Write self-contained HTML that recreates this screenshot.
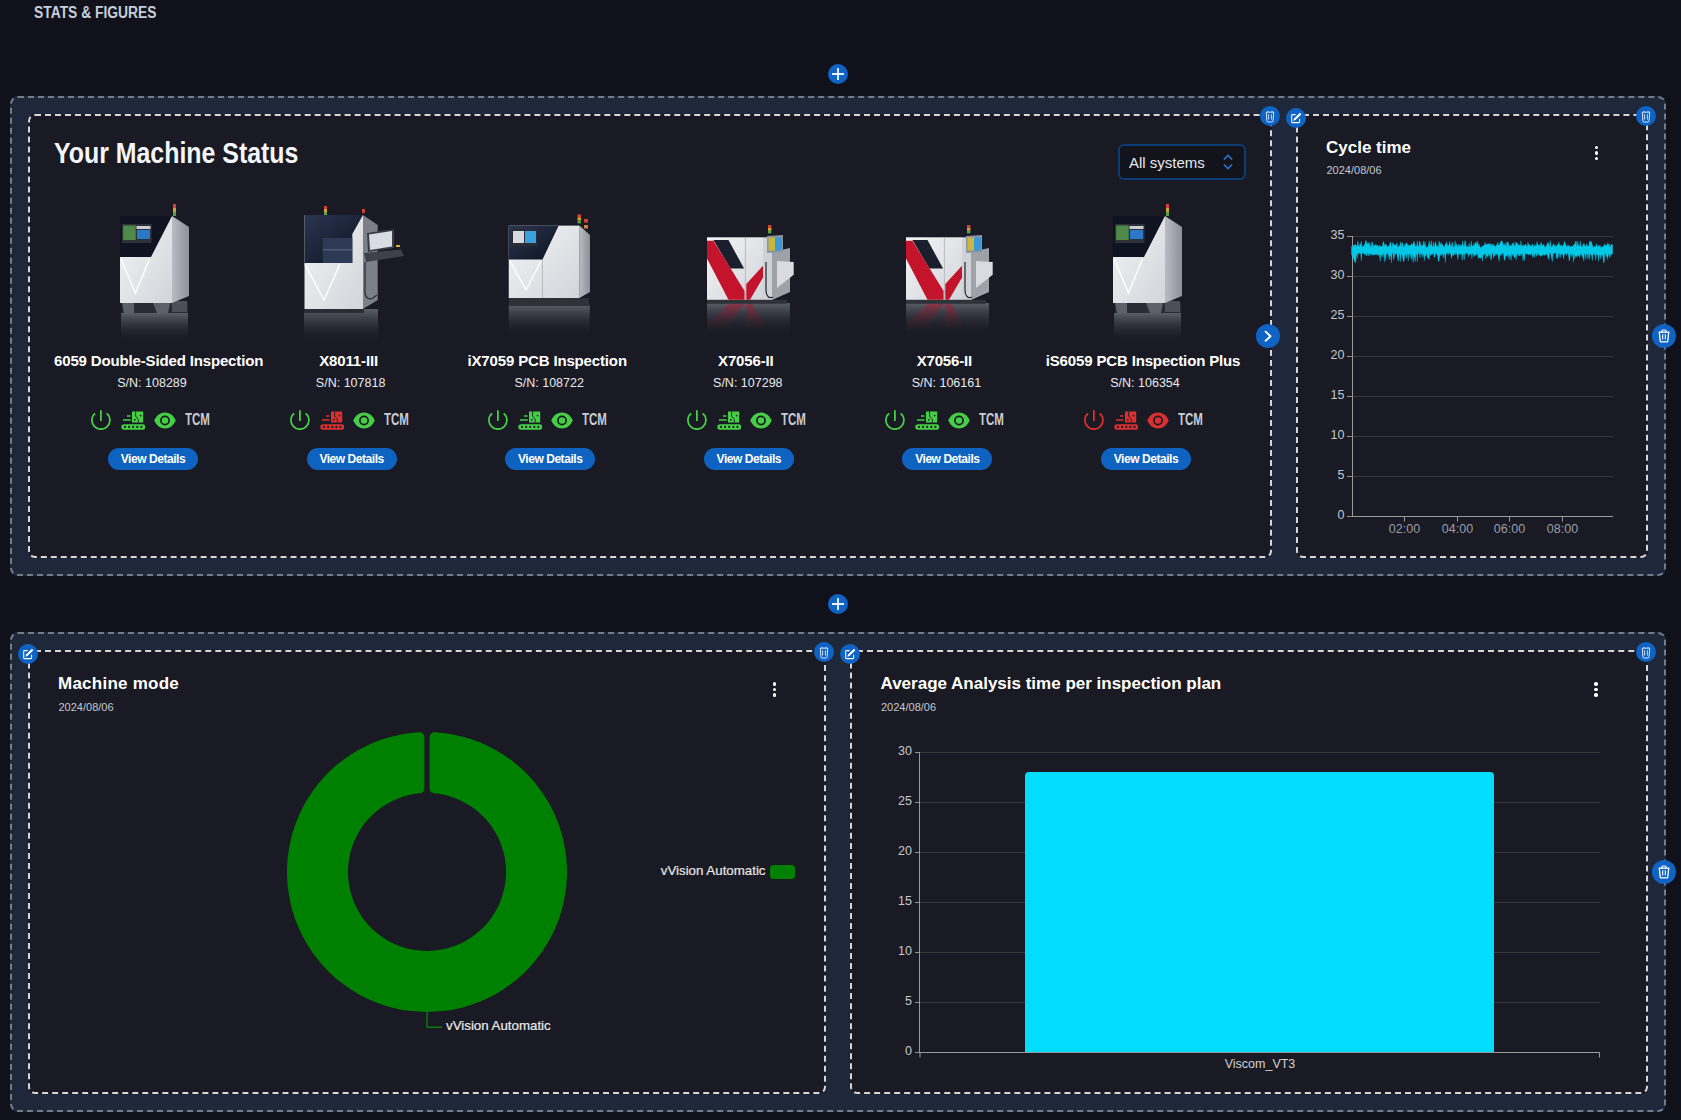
<!DOCTYPE html>
<html><head><meta charset="utf-8">
<style>
*{box-sizing:border-box;margin:0;padding:0}
html,body{width:1681px;height:1120px;overflow:hidden;background:#10111a;font-family:"Liberation Sans",sans-serif;color:#fff}
.a{position:absolute;white-space:nowrap}
.t{position:absolute;white-space:nowrap;transform-origin:0 0}
.outer{position:absolute;left:10px;width:1656px;height:480px;background:#1e283a;border:2px dashed #737c89;border-radius:8px}
.card{position:absolute;background:#191a23;border:2px dashed #d6d6d6;border-radius:7px}
.bb{position:absolute;border-radius:50%;background:#0e63c4}
.bb svg{position:absolute;left:0;top:0}
.nm{font-size:15px;line-height:15px;font-weight:bold;color:#fff}
.sn{font-size:12.5px;line-height:12.5px;color:#e8eaee}
.vd{position:absolute;width:90px;height:22px;border-radius:11px;background:#0e62c0;top:448px}
.vd span{position:absolute;left:0;right:0;top:5px;text-align:center;font-size:12px;line-height:12px;font-weight:bold;color:#fff;letter-spacing:-0.45px}
.tcm{font-size:16px;line-height:16px;font-weight:bold;color:#c8ccd3;transform:scaleX(0.72)}
.ttl{font-size:17px;line-height:17px;font-weight:bold;color:#fff}
.dt{font-size:11px;line-height:11px;color:#c3c8d0}
.yl{position:absolute;font-size:12.5px;line-height:12.5px;color:#c5c8ce;text-align:right;width:30px}
.xl{position:absolute;font-size:12.5px;line-height:12.5px;color:#9a9ea6;text-align:center;width:50px}
.dots{position:absolute;width:4px}
.dots i{display:block;width:3.5px;height:3.5px;border-radius:1.75px;background:#fff;margin-bottom:2.1px}
</style></head><body>
<svg width="0" height="0" style="position:absolute">
<defs>
<symbol id="trs" viewBox="0 0 20 20"><path d="M6.3 6.2h7.4l-.6 8.6c-.1.8-.6 1.2-1.3 1.2H8.2c-.7 0-1.2-.4-1.3-1.2z" fill="none" stroke="#dfe8f5" stroke-width="1"/><path d="M8 6V4.9M12 6V4.9" stroke="#dfe8f5" stroke-width="1.1"/><path d="M8.6 8.3v5.2M11.4 8.3v5.2" stroke="#dfe8f5" stroke-width="0.9"/></symbol>
<symbol id="trl" viewBox="0 0 24 24"><path d="M6.6 8.2h10.8" stroke="#fff" stroke-width="1.3" fill="none"/><path d="M7.3 8.3l0.9 8.6c.1.7.5 1 1.1 1h5.4c.6 0 1-.3 1.1-1l0.9-8.6" fill="none" stroke="#fff" stroke-width="1.3"/><path d="M9.9 8V7c0-.6.4-1 1-1h2.2c.6 0 1 .4 1 1v1" fill="none" stroke="#fff" stroke-width="1.2"/><path d="M10.7 10.3v5.2M13.3 10.3v5.2" stroke="#fff" stroke-width="1.1"/></symbol>
<symbol id="edt" viewBox="0 0 20 20"><path d="M9.6 6.6H6.5c-.5 0-.8.3-.8.8v6.4c0 .5.3.8.8.8h6.3c.5 0 .8-.3.8-.8v-3.1" fill="none" stroke="#fff" stroke-width="1.05"/><path d="M13.9 4.7l1.5 1.5-5.9 5.9-2.2.7.7-2.2z" fill="#fff"/></symbol>
<symbol id="pls" viewBox="0 0 20 20"><path d="M10 4v12M4 10h12" stroke="#e8f0fa" stroke-width="1.9"/></symbol>
<symbol id="arr" viewBox="0 0 24 24"><path d="M9.6 7.6l4.9 4.6-4.9 4.6" fill="none" stroke="#fff" stroke-width="1.9" stroke-linecap="round" stroke-linejoin="round"/></symbol>
<symbol id="pw" viewBox="0 0 20 20"><path d="M4.1 3.3A9 9 0 1 0 15.7 3.3" fill="none" stroke="currentColor" stroke-width="1.75"/><path d="M9.9 0.2V10.9" stroke="currentColor" stroke-width="1.8"/></symbol>
<symbol id="cv" viewBox="0 0 24 19"><rect x="0.3" y="13.2" width="24" height="5.5" rx="2.75" fill="currentColor"/><g fill="#191a23"><circle cx="4" cy="15.95" r="1.1"/><circle cx="8.1" cy="15.95" r="1.1"/><circle cx="12.2" cy="15.95" r="1.1"/><circle cx="16.3" cy="15.95" r="1.1"/><circle cx="20.4" cy="15.95" r="1.1"/></g><rect x="11" y="0.5" width="11.2" height="11" fill="currentColor"/><path d="M14.6 0.5v4.6l2.7 3.4v3" stroke="#191a23" stroke-width="0.9" fill="none"/><circle cx="13.8" cy="8.8" r="0.9" fill="#191a23"/><circle cx="19.6" cy="4.6" r="0.9" fill="#191a23"/><path d="M6 5h3.5M2 9h7.7" stroke="currentColor" stroke-width="1.6"/></symbol>
<symbol id="eye" viewBox="0 0 22 17"><path d="M0.3 8.5C2.6 3.3 6.3 0.6 11 0.6S19.4 3.3 21.7 8.5C19.4 13.7 15.7 16.4 11 16.4S2.6 13.7 0.3 8.5z" fill="currentColor"/><circle cx="11" cy="8.5" r="4.1" fill="none" stroke="#191a23" stroke-width="1.7"/></symbol>
</defs></svg>

<div class="t" style="left:34px;top:4.5px;font-size:16px;line-height:16px;font-weight:bold;color:#c6cedb;transform:scaleX(0.865)">STATS &amp; FIGURES</div>

<div class="bb" style="left:828px;top:64px;width:20px;height:20px"><svg width="20" height="20"><use href="#pls"/></svg></div>
<div class="outer" style="top:96px"></div>
<div class="card" style="left:28px;top:114px;width:1244px;height:444px"></div>
<div class="card" style="left:1296px;top:114px;width:352px;height:444px"></div>
<div class="bb" style="left:828px;top:594px;width:20px;height:20px"><svg width="20" height="20"><use href="#pls"/></svg></div>
<div class="outer" style="top:632px"></div>
<div class="card" style="left:28px;top:650px;width:798px;height:444px"></div>
<div class="card" style="left:850px;top:650px;width:798px;height:444px"></div>
<svg class="a" style="left:0;top:0" width="1300" height="560">
<defs>
<linearGradient id="rf" x1="0" y1="0" x2="0" y2="1"><stop offset="0" stop-color="#676a73" stop-opacity="0.85"/><stop offset="1" stop-color="#191a23" stop-opacity="0"/></linearGradient>
<linearGradient id="rfr" x1="0" y1="0" x2="0" y2="1"><stop offset="0" stop-color="#b01830" stop-opacity="0.55"/><stop offset="1" stop-color="#191a23" stop-opacity="0"/></linearGradient>
<linearGradient id="sd" x1="0" y1="0" x2="1" y2="0"><stop offset="0" stop-color="#b9bcc3"/><stop offset="1" stop-color="#8e9199"/></linearGradient>
<linearGradient id="fr" x1="0" y1="0" x2="1" y2="1"><stop offset="0" stop-color="#f3f4f7"/><stop offset="1" stop-color="#d2d5da"/></linearGradient>
<linearGradient id="dw" x1="0" y1="0" x2="1" y2="1"><stop offset="0" stop-color="#2a3550"/><stop offset="1" stop-color="#0e1322"/></linearGradient>
<g id="mA">
<rect x="121" y="313" width="67" height="30" fill="url(#rf)"/>
<rect x="122" y="303" width="66" height="10" fill="#2a2c33"/>
<polygon points="122,303 134,303 134,313 124,313" fill="#5d6068"/><polygon points="153,303 170,303 168,313 157,313" fill="#5d6068"/><rect x="172" y="301" width="15" height="11" fill="#4c4f57"/>
<polygon points="172,216 189,227 189,296 172,303" fill="url(#sd)"/>
<rect x="120" y="216" width="52" height="87" fill="url(#fr)"/>
<polygon points="120,216 172,216 151,257 120,257" fill="#0f1322"/>
<rect x="122" y="224" width="29.6" height="19" fill="#2e3138"/>
<rect x="123.2" y="225.5" width="12.5" height="14.5" fill="#4f8a4a"/>
<rect x="136.5" y="226" width="14" height="3" fill="#c8ccd2"/>
<rect x="137" y="230" width="13" height="9" fill="#2a78c8"/>
<polyline points="121,259 135.5,293 149.5,259" fill="none" stroke="#ffffff" stroke-width="2.2" opacity="0.25"/>
<polyline points="121,259 135.5,293 149.5,259" fill="none" stroke="#ffffff" stroke-width="1.1"/>
<rect x="173" y="204" width="3" height="4" fill="#d84030"/><rect x="173" y="208" width="3" height="4" fill="#d0a030"/><rect x="173" y="212" width="3" height="4" fill="#50a050"/>
</g>
</defs>
<use href="#mA"/>
<use href="#mA" x="993"/>
<!-- machine B -->
<rect x="304" y="309" width="74" height="36" fill="url(#rf)"/>
<rect x="304" y="309" width="60" height="4" fill="#2b2d35"/>
<polygon points="363,215 377.7,225 377.7,300 363,309" fill="#7d8088"/>
<rect x="304.5" y="215" width="58.5" height="94" fill="url(#fr)"/>
<polygon points="304.5,215 363,215 352.3,234 352.3,263 304.5,263" fill="url(#dw)"/>
<rect x="322.8" y="238" width="29.5" height="25" fill="#2c3a55"/><rect x="322.8" y="249.5" width="29.5" height="0.8" fill="#6a7890"/>
<polyline points="305,264 324,300 340,264" fill="none" stroke="#ffffff" stroke-width="2.2" opacity="0.25"/><polyline points="305,264 324,300 340,264" fill="none" stroke="#ffffff" stroke-width="1.1"/>
<polygon points="367,233 394,229 394,248 368,252" fill="#3b3e46"/>
<polygon points="369,234.5 392,231 392,246.5 370,250" fill="#d9dde3"/>
<polygon points="364,253 401,249.5 404,256 366,262" fill="#3e4149"/>
<rect x="396" y="245" width="4" height="2" fill="#d8b030"/>
<path d="M365 262v30c0 6 4 8 8 6l4-3" fill="none" stroke="#2a2c33" stroke-width="1.2"/>
<rect x="324" y="206" width="3" height="3" fill="#d04030"/><rect x="324" y="209" width="3" height="3" fill="#d0a030"/><rect x="324" y="212" width="3" height="3" fill="#60a050"/><rect x="362" y="209" width="3" height="4" fill="#d04030"/>
<!-- machine C -->
<rect x="508.75" y="305" width="81" height="32" fill="url(#rf)"/>
<rect x="509" y="298" width="80" height="8" fill="#2f3139"/>
<polygon points="579.4,225.6 590,235 590,292 579.4,298" fill="url(#sd)"/>
<rect x="508.75" y="225.6" width="70.65" height="72.4" fill="url(#fr)"/>
<polygon points="508.75,225.6 558.75,225.6 542.5,259.4 508.75,259.4" fill="url(#dw)"/>
<rect x="512" y="229.4" width="25" height="16.85" fill="#2a2d33"/>
<rect x="513" y="231" width="11" height="12" fill="#d8dadf"/>
<rect x="525" y="231" width="11" height="12" fill="#3aa0e0"/>
<line x1="542.5" y1="259.4" x2="542.5" y2="298" stroke="#a0a3aa" stroke-width="0.6"/>
<polyline points="510,261 526,290 541,261" fill="none" stroke="#ffffff" stroke-width="2.2" opacity="0.25"/><polyline points="510,261 526,290 541,261" fill="none" stroke="#ffffff" stroke-width="1.1"/>
<rect x="577.5" y="214.4" width="3.5" height="3" fill="#d84030"/><rect x="577.5" y="217.4" width="3.5" height="3" fill="#d0a030"/><rect x="577.5" y="220.4" width="3.5" height="3" fill="#50a050"/>
<rect x="584" y="219" width="4" height="3.5" fill="#d84030"/><rect x="584" y="225" width="4" height="3.5" fill="#d08030"/>
<!-- machine D -->
<g id="mD">
<rect x="707" y="303" width="83" height="33" fill="url(#rf)"/>
<polygon points="728.5,304 744.6,304 720,336 707,336 707,325" fill="url(#rfr)"/>
<polygon points="746.3,304 752,304 763,322 763,336 746.3,336" fill="url(#rfr)"/>
<rect x="707" y="299.8" width="80" height="4" fill="#30323a"/>
<polygon points="772,252 790,248 790,292 772,300" fill="#9ea1a8"/>
<polygon points="777,261 793.7,262 793.7,274.7 777,288" fill="#d9dbe0"/>
<rect x="763" y="237.3" width="9" height="62.5" fill="#cfd2d7"/>
<rect x="707" y="237.3" width="56" height="62.5" fill="url(#fr)"/>
<polygon points="713.4,240.1 728.5,240.1 744.1,268.5 730.4,268.5" fill="#1b1e2c"/>
<polygon points="707,240.7 713.4,240.7 744.6,291 744.6,299.8 728.5,299.8 707,258.5" fill="#c3142b"/>
<polygon points="746.3,284 763,265.8 763,277.5 750,299.8 746.3,299.8" fill="#c3142b"/>
<line x1="745.4" y1="237.3" x2="745.4" y2="299.8" stroke="#b8bac0" stroke-width="1"/>
<polygon points="767,236 783,235 783,252 767,253" fill="#8f959e"/>
<rect x="768.5" y="237.5" width="6.5" height="13" fill="#c8b840"/><rect x="775" y="237.5" width="7" height="13" fill="#3a98d8"/>
<path d="M766 262v28c0 6 3 9 7 7" fill="none" stroke="#24262c" stroke-width="1.2"/>
<rect x="768" y="225" width="3.4" height="3" fill="#d84030"/><rect x="768" y="228" width="3.4" height="2.8" fill="#d0a030"/><rect x="768" y="230.8" width="3.4" height="2.6" fill="#50a050"/>
</g>
<use href="#mD" x="199"/>
</svg>
<div class="t" style="left:54px;top:137.8px;font-size:29.5px;line-height:29.5px;font-weight:bold;color:#f4f6fa;transform:scaleX(0.844)">Your Machine Status</div>
<div class="a" style="left:1118px;top:144px;width:128px;height:36px;border:2px solid #0a3c75;border-radius:6px;background:#12131b"></div>
<div class="a" style="left:1129px;top:154.8px;font-size:15px;line-height:15px;color:#e4e8ee">All systems</div>
<svg class="a" style="left:1220px;top:152px" width="16" height="20"><path d="M4 7.5l4-4.2 4 4.2M4 12.5l4 4.2 4-4.2" fill="none" stroke="#2b79d2" stroke-width="1.6"/></svg>
<div class="a nm" style="left:54px;top:353.3px;letter-spacing:-0.15px">6059 Double-Sided Inspection</div>
<div class="a sn" style="left:2.0px;width:300px;text-align:center;top:377.4px">S/N: 108289</div>
<svg class="a" style="left:91.0px;top:410px;color:#46cf46" width="20" height="20"><use href="#pw"/></svg>
<svg class="a" style="left:121.0px;top:410.5px;color:#46cf46" width="24" height="19"><use href="#cv"/></svg>
<svg class="a" style="left:154.0px;top:411.5px;color:#46cf46" width="22" height="17"><use href="#eye"/></svg>
<div class="t tcm" style="left:185.0px;top:411.7px">TCM</div>
<div class="vd" style="left:108.0px"><span>View Details</span></div>
<div class="a nm" style="left:198.6px;width:300px;text-align:center;top:353.3px;letter-spacing:-0.15px">X8011-III</div>
<div class="a sn" style="left:200.6px;width:300px;text-align:center;top:377.4px">S/N: 107818</div>
<svg class="a" style="left:289.6px;top:410px;color:#46cf46" width="20" height="20"><use href="#pw"/></svg>
<svg class="a" style="left:319.6px;top:410.5px;color:#d93131" width="24" height="19"><use href="#cv"/></svg>
<svg class="a" style="left:352.6px;top:411.5px;color:#46cf46" width="22" height="17"><use href="#eye"/></svg>
<div class="t tcm" style="left:383.6px;top:411.7px">TCM</div>
<div class="vd" style="left:306.6px"><span>View Details</span></div>
<div class="a nm" style="left:397.2px;width:300px;text-align:center;top:353.3px;letter-spacing:-0.15px">iX7059 PCB Inspection</div>
<div class="a sn" style="left:399.2px;width:300px;text-align:center;top:377.4px">S/N: 108722</div>
<svg class="a" style="left:488.2px;top:410px;color:#46cf46" width="20" height="20"><use href="#pw"/></svg>
<svg class="a" style="left:518.2px;top:410.5px;color:#46cf46" width="24" height="19"><use href="#cv"/></svg>
<svg class="a" style="left:551.2px;top:411.5px;color:#46cf46" width="22" height="17"><use href="#eye"/></svg>
<div class="t tcm" style="left:582.2px;top:411.7px">TCM</div>
<div class="vd" style="left:505.2px"><span>View Details</span></div>
<div class="a nm" style="left:595.8px;width:300px;text-align:center;top:353.3px;letter-spacing:-0.15px">X7056-II</div>
<div class="a sn" style="left:597.8px;width:300px;text-align:center;top:377.4px">S/N: 107298</div>
<svg class="a" style="left:686.8px;top:410px;color:#46cf46" width="20" height="20"><use href="#pw"/></svg>
<svg class="a" style="left:716.8px;top:410.5px;color:#46cf46" width="24" height="19"><use href="#cv"/></svg>
<svg class="a" style="left:749.8px;top:411.5px;color:#46cf46" width="22" height="17"><use href="#eye"/></svg>
<div class="t tcm" style="left:780.8px;top:411.7px">TCM</div>
<div class="vd" style="left:703.8px"><span>View Details</span></div>
<div class="a nm" style="left:794.4px;width:300px;text-align:center;top:353.3px;letter-spacing:-0.15px">X7056-II</div>
<div class="a sn" style="left:796.4px;width:300px;text-align:center;top:377.4px">S/N: 106161</div>
<svg class="a" style="left:885.4px;top:410px;color:#46cf46" width="20" height="20"><use href="#pw"/></svg>
<svg class="a" style="left:915.4px;top:410.5px;color:#46cf46" width="24" height="19"><use href="#cv"/></svg>
<svg class="a" style="left:948.4px;top:411.5px;color:#46cf46" width="22" height="17"><use href="#eye"/></svg>
<div class="t tcm" style="left:979.4px;top:411.7px">TCM</div>
<div class="vd" style="left:902.4px"><span>View Details</span></div>
<div class="a nm" style="left:993.0px;width:300px;text-align:center;top:353.3px;letter-spacing:-0.15px">iS6059 PCB Inspection Plus</div>
<div class="a sn" style="left:995.0px;width:300px;text-align:center;top:377.4px">S/N: 106354</div>
<svg class="a" style="left:1084.0px;top:410px;color:#d93131" width="20" height="20"><use href="#pw"/></svg>
<svg class="a" style="left:1114.0px;top:410.5px;color:#d93131" width="24" height="19"><use href="#cv"/></svg>
<svg class="a" style="left:1147.0px;top:411.5px;color:#d93131" width="22" height="17"><use href="#eye"/></svg>
<div class="t tcm" style="left:1178.0px;top:411.7px">TCM</div>
<div class="vd" style="left:1101.0px"><span>View Details</span></div>
<div class="bb" style="left:1256px;top:324px;width:24px;height:24px"><svg width="24" height="24"><use href="#arr"/></svg></div>
<div class="a ttl" style="left:1326px;top:138.5px">Cycle time</div>
<div class="a dt" style="left:1326.5px;top:165.3px">2024/08/06</div>
<div class="dots" style="left:1594.6px;top:145.5px"><i></i><i></i><i></i></div>
<svg class="a" style="left:1300px;top:220px" width="330" height="320">
<line x1="52" y1="16.5" x2="313" y2="16.5" stroke="#3b3a3a" stroke-width="1"/>
<line x1="47" y1="16.5" x2="52" y2="16.5" stroke="#8f8f8f" stroke-width="1"/>
<line x1="52" y1="56.5" x2="313" y2="56.5" stroke="#3b3a3a" stroke-width="1"/>
<line x1="47" y1="56.5" x2="52" y2="56.5" stroke="#8f8f8f" stroke-width="1"/>
<line x1="52" y1="96.5" x2="313" y2="96.5" stroke="#3b3a3a" stroke-width="1"/>
<line x1="47" y1="96.5" x2="52" y2="96.5" stroke="#8f8f8f" stroke-width="1"/>
<line x1="52" y1="136.5" x2="313" y2="136.5" stroke="#3b3a3a" stroke-width="1"/>
<line x1="47" y1="136.5" x2="52" y2="136.5" stroke="#8f8f8f" stroke-width="1"/>
<line x1="52" y1="176.5" x2="313" y2="176.5" stroke="#3b3a3a" stroke-width="1"/>
<line x1="47" y1="176.5" x2="52" y2="176.5" stroke="#8f8f8f" stroke-width="1"/>
<line x1="52" y1="216.5" x2="313" y2="216.5" stroke="#3b3a3a" stroke-width="1"/>
<line x1="47" y1="216.5" x2="52" y2="216.5" stroke="#8f8f8f" stroke-width="1"/>
<line x1="52" y1="256.5" x2="313" y2="256.5" stroke="#3b3a3a" stroke-width="1"/>
<line x1="47" y1="256.5" x2="52" y2="256.5" stroke="#8f8f8f" stroke-width="1"/>
<line x1="52" y1="296.5" x2="313" y2="296.5" stroke="#3b3a3a" stroke-width="1"/>
<line x1="47" y1="296.5" x2="52" y2="296.5" stroke="#8f8f8f" stroke-width="1"/>
<line x1="52.5" y1="16" x2="52.5" y2="297" stroke="#9a9a9a" stroke-width="1"/>
<line x1="52" y1="296.5" x2="313" y2="296.5" stroke="#9a9a9a" stroke-width="1"/>
<line x1="104.5" y1="296.5" x2="104.5" y2="301.5" stroke="#9a9a9a" stroke-width="1"/>
<line x1="157.5" y1="296.5" x2="157.5" y2="301.5" stroke="#9a9a9a" stroke-width="1"/>
<line x1="209.5" y1="296.5" x2="209.5" y2="301.5" stroke="#9a9a9a" stroke-width="1"/>
<line x1="262.5" y1="296.5" x2="262.5" y2="301.5" stroke="#9a9a9a" stroke-width="1"/>
</svg>
<svg class="a" style="left:1340px;top:220px" width="280" height="60"><polygon points="11.5,26.3 12.2,26.6 12.9,27.3 13.6,25.0 14.3,25.1 15.0,24.7 15.7,24.4 16.4,26.0 17.1,26.5 17.8,20.8 18.5,24.2 19.2,26.9 19.9,24.4 20.6,23.7 21.3,21.2 22.0,27.3 22.7,25.9 23.4,26.8 24.1,24.5 24.8,25.3 25.5,20.8 26.2,20.7 26.9,22.9 27.6,24.2 28.3,23.4 29.0,22.2 29.7,25.2 30.4,27.4 31.1,22.1 31.8,27.5 32.5,21.6 33.2,25.4 33.9,26.4 34.6,25.1 35.3,25.2 36.0,24.2 36.7,25.7 37.4,25.3 38.1,25.4 38.8,27.4 39.5,24.7 40.2,26.5 40.9,26.1 41.6,26.8 42.3,25.7 43.0,22.4 43.7,21.3 44.4,25.5 45.1,24.2 45.8,24.6 46.5,24.5 47.2,27.4 47.9,26.3 48.6,26.1 49.3,25.4 50.0,23.0 50.7,21.7 51.4,27.4 52.1,25.8 52.8,22.4 53.5,23.6 54.2,25.1 54.9,24.7 55.6,25.8 56.3,24.6 57.0,22.6 57.7,26.7 58.4,27.2 59.1,25.6 59.8,25.8 60.5,21.7 61.2,26.5 61.9,22.4 62.6,22.8 63.3,26.9 64.0,27.4 64.7,24.9 65.4,24.2 66.1,23.0 66.8,22.8 67.5,24.6 68.2,25.8 68.9,24.7 69.6,26.0 70.3,25.0 71.0,25.4 71.7,23.2 72.4,25.0 73.1,23.4 73.8,21.0 74.5,23.0 75.2,26.2 75.9,26.3 76.6,25.9 77.3,20.6 78.0,25.8 78.7,27.1 79.4,21.1 80.1,21.5 80.8,25.0 81.5,25.4 82.2,25.8 82.9,25.2 83.6,20.8 84.3,25.4 85.0,21.5 85.7,26.3 86.4,26.8 87.1,27.5 87.8,27.2 88.5,24.4 89.2,20.7 89.9,25.5 90.6,24.6 91.3,20.6 92.0,26.1 92.7,27.2 93.4,21.7 94.1,26.9 94.8,24.5 95.5,21.3 96.2,24.5 96.9,26.0 97.6,26.1 98.3,27.4 99.0,20.8 99.7,23.6 100.4,24.6 101.1,22.2 101.8,24.2 102.5,24.5 103.2,25.7 103.9,27.2 104.6,26.7 105.3,23.8 106.0,24.3 106.7,21.6 107.4,25.4 108.1,25.0 108.8,26.2 109.5,21.2 110.2,23.7 110.9,27.0 111.6,24.2 112.3,21.7 113.0,26.5 113.7,27.2 114.4,26.8 115.1,20.8 115.8,26.1 116.5,23.4 117.2,26.4 117.9,27.0 118.6,24.4 119.3,24.2 120.0,27.2 120.7,24.6 121.4,25.4 122.1,25.1 122.8,20.8 123.5,27.1 124.2,25.9 124.9,20.6 125.6,21.3 126.3,26.5 127.0,27.0 127.7,26.3 128.4,27.0 129.1,23.0 129.8,26.6 130.5,27.2 131.2,20.8 131.9,25.7 132.6,26.0 133.3,25.4 134.0,23.5 134.7,25.8 135.4,22.5 136.1,21.8 136.8,24.4 137.5,20.9 138.2,26.0 138.9,23.6 139.6,25.7 140.3,27.4 141.0,27.4 141.7,26.8 142.4,26.3 143.1,25.6 143.8,25.4 144.5,24.7 145.2,22.2 145.9,25.1 146.6,24.4 147.3,23.8 148.0,24.2 148.7,23.5 149.4,24.7 150.1,23.1 150.8,25.8 151.5,25.1 152.2,23.6 152.9,26.2 153.6,24.3 154.3,25.7 155.0,25.9 155.7,27.5 156.4,24.5 157.1,25.5 157.8,21.9 158.5,24.9 159.2,24.7 159.9,23.8 160.6,21.6 161.3,21.0 162.0,20.7 162.7,22.9 163.4,26.2 164.1,23.2 164.8,26.3 165.5,23.5 166.2,26.7 166.9,21.6 167.6,22.2 168.3,22.5 169.0,26.1 169.7,26.0 170.4,25.6 171.1,25.1 171.8,26.3 172.5,23.0 173.2,24.4 173.9,22.1 174.6,26.6 175.3,24.8 176.0,22.2 176.7,22.5 177.4,23.6 178.1,24.5 178.8,25.1 179.5,24.9 180.2,26.3 180.9,20.7 181.6,25.7 182.3,25.1 183.0,26.7 183.7,24.5 184.4,25.7 185.1,24.5 185.8,24.4 186.5,25.3 187.2,27.1 187.9,22.2 188.6,24.6 189.3,24.2 190.0,26.4 190.7,25.3 191.4,26.2 192.1,24.2 192.8,24.3 193.5,27.4 194.2,26.3 194.9,24.2 195.6,25.9 196.3,25.4 197.0,21.5 197.7,24.2 198.4,25.6 199.1,24.3 199.8,27.0 200.5,24.0 201.2,22.0 201.9,25.6 202.6,24.7 203.3,24.9 204.0,24.3 204.7,27.0 205.4,27.2 206.1,26.4 206.8,24.8 207.5,22.6 208.2,24.5 208.9,22.2 209.6,27.4 210.3,20.5 211.0,26.7 211.7,27.2 212.4,25.7 213.1,24.4 213.8,23.4 214.5,27.0 215.2,24.6 215.9,27.2 216.6,25.7 217.3,24.4 218.0,25.2 218.7,21.9 219.4,23.9 220.1,25.7 220.8,25.1 221.5,25.9 222.2,26.4 222.9,24.6 223.6,25.4 224.3,20.9 225.0,23.0 225.7,24.3 226.4,26.5 227.1,26.2 227.8,25.3 228.5,25.4 229.2,25.5 229.9,26.6 230.6,27.3 231.3,25.6 232.0,26.9 232.7,26.1 233.4,25.2 234.1,24.3 234.8,24.5 235.5,21.3 236.2,20.9 236.9,27.2 237.6,21.2 238.3,24.2 239.0,26.6 239.7,25.5 240.4,20.8 241.1,27.4 241.8,26.2 242.5,26.3 243.2,24.2 243.9,23.2 244.6,24.9 245.3,26.5 246.0,26.3 246.7,23.5 247.4,25.9 248.1,26.2 248.8,26.2 249.5,20.9 250.2,21.6 250.9,21.9 251.6,21.6 252.3,25.0 253.0,26.6 253.7,27.4 254.4,26.4 255.1,26.2 255.8,26.5 256.5,23.5 257.2,25.9 257.9,27.3 258.6,25.3 259.3,26.4 260.0,24.7 260.7,27.4 261.4,27.2 262.1,26.7 262.8,27.1 263.5,25.8 264.2,25.3 264.9,23.7 265.6,26.1 266.3,25.1 267.0,25.2 267.7,23.0 268.4,23.6 269.1,26.7 269.8,24.1 270.5,27.5 271.2,24.2 271.9,24.4 272.6,24.5 272.6,34.3 271.9,34.4 271.2,34.1 270.5,35.1 269.8,37.8 269.1,35.6 268.4,32.9 267.7,39.7 267.0,35.8 266.3,37.0 265.6,34.2 264.9,33.3 264.2,42.5 263.5,42.7 262.8,35.9 262.1,34.8 261.4,35.1 260.7,39.0 260.0,34.7 259.3,35.3 258.6,41.4 257.9,34.5 257.2,35.2 256.5,33.3 255.8,40.3 255.1,34.8 254.4,34.9 253.7,32.7 253.0,34.4 252.3,40.7 251.6,35.6 250.9,34.9 250.2,33.1 249.5,39.5 248.8,33.0 248.1,39.3 247.4,33.6 246.7,33.7 246.0,39.3 245.3,34.2 244.6,32.9 243.9,41.1 243.2,38.1 242.5,37.0 241.8,33.9 241.1,35.4 240.4,33.4 239.7,37.8 239.0,35.7 238.3,35.5 237.6,35.0 236.9,37.2 236.2,36.0 235.5,35.9 234.8,39.2 234.1,33.5 233.4,42.5 232.7,35.7 232.0,33.4 231.3,36.2 230.6,33.4 229.9,38.9 229.2,41.2 228.5,35.8 227.8,32.9 227.1,33.1 226.4,35.5 225.7,33.1 225.0,33.5 224.3,35.1 223.6,39.1 222.9,35.6 222.2,33.9 221.5,34.5 220.8,34.3 220.1,38.0 219.4,33.6 218.7,33.2 218.0,38.4 217.3,36.6 216.6,39.1 215.9,32.6 215.2,32.8 214.5,33.6 213.8,33.9 213.1,33.3 212.4,41.7 211.7,39.0 211.0,35.3 210.3,32.7 209.6,33.6 208.9,39.8 208.2,38.0 207.5,35.4 206.8,33.4 206.1,35.0 205.4,34.0 204.7,35.2 204.0,35.2 203.3,34.1 202.6,35.6 201.9,35.1 201.2,36.0 200.5,36.5 199.8,35.0 199.1,35.2 198.4,34.2 197.7,32.9 197.0,36.4 196.3,35.2 195.6,33.6 194.9,34.5 194.2,37.9 193.5,33.3 192.8,37.4 192.1,35.2 191.4,33.1 190.7,34.3 190.0,35.4 189.3,33.6 188.6,35.1 187.9,34.0 187.2,33.5 186.5,34.7 185.8,32.9 185.1,33.4 184.4,40.9 183.7,36.6 183.0,40.9 182.3,33.4 181.6,34.5 180.9,35.8 180.2,33.6 179.5,35.7 178.8,35.9 178.1,34.4 177.4,32.9 176.7,35.8 176.0,40.0 175.3,35.3 174.6,38.1 173.9,36.5 173.2,33.8 172.5,35.5 171.8,32.9 171.1,40.4 170.4,36.8 169.7,34.4 169.0,39.5 168.3,34.9 167.6,34.7 166.9,36.6 166.2,35.7 165.5,36.0 164.8,40.5 164.1,39.2 163.4,33.3 162.7,32.9 162.0,35.4 161.3,32.7 160.6,35.6 159.9,34.7 159.2,41.5 158.5,38.4 157.8,34.2 157.1,33.5 156.4,35.1 155.7,33.1 155.0,35.8 154.3,35.7 153.6,38.1 152.9,32.7 152.2,34.0 151.5,39.4 150.8,40.0 150.1,33.8 149.4,35.9 148.7,33.8 148.0,37.3 147.3,35.9 146.6,35.6 145.9,39.2 145.2,33.4 144.5,34.0 143.8,35.1 143.1,35.4 142.4,41.4 141.7,34.6 141.0,38.7 140.3,38.0 139.6,37.5 138.9,37.8 138.2,38.5 137.5,34.2 136.8,33.3 136.1,35.5 135.4,34.9 134.7,35.1 134.0,36.8 133.3,34.2 132.6,32.9 131.9,38.8 131.2,33.2 130.5,34.7 129.8,35.3 129.1,32.9 128.4,37.1 127.7,33.3 127.0,33.6 126.3,32.7 125.6,34.6 124.9,32.9 124.2,40.2 123.5,34.0 122.8,34.5 122.1,40.4 121.4,33.2 120.7,34.4 120.0,34.6 119.3,33.1 118.6,34.4 117.9,39.6 117.2,35.6 116.5,32.8 115.8,35.0 115.1,32.8 114.4,34.6 113.7,34.8 113.0,35.9 112.3,33.8 111.6,38.7 110.9,35.3 110.2,33.6 109.5,32.8 108.8,33.0 108.1,35.4 107.4,33.3 106.7,33.2 106.0,34.2 105.3,42.8 104.6,34.4 103.9,34.0 103.2,38.2 102.5,33.1 101.8,35.4 101.1,33.8 100.4,35.5 99.7,36.4 99.0,40.7 98.3,41.7 97.6,35.4 96.9,34.8 96.2,33.6 95.5,33.5 94.8,36.4 94.1,37.7 93.4,32.8 92.7,34.1 92.0,34.7 91.3,34.4 90.6,35.7 89.9,32.8 89.2,39.6 88.5,38.9 87.8,37.7 87.1,36.5 86.4,32.7 85.7,36.4 85.0,34.9 84.3,41.1 83.6,33.9 82.9,37.4 82.2,32.9 81.5,34.9 80.8,32.6 80.1,38.0 79.4,33.8 78.7,34.0 78.0,32.5 77.3,42.2 76.6,34.5 75.9,34.0 75.2,41.8 74.5,38.3 73.8,35.9 73.1,42.7 72.4,34.2 71.7,40.2 71.0,33.1 70.3,37.6 69.6,33.4 68.9,34.3 68.2,40.9 67.5,33.6 66.8,35.1 66.1,38.7 65.4,33.0 64.7,35.8 64.0,41.9 63.3,41.1 62.6,37.6 61.9,34.4 61.2,33.5 60.5,41.9 59.8,33.8 59.1,35.0 58.4,41.4 57.7,39.2 57.0,34.1 56.3,33.6 55.6,34.6 54.9,33.5 54.2,37.9 53.5,39.7 52.8,32.9 52.1,33.6 51.4,42.9 50.7,35.9 50.0,35.6 49.3,40.0 48.6,35.9 47.9,33.0 47.2,34.0 46.5,33.7 45.8,40.3 45.1,33.5 44.4,42.3 43.7,32.6 43.0,36.9 42.3,33.3 41.6,37.1 40.9,34.0 40.2,41.5 39.5,35.8 38.8,34.3 38.1,35.5 37.4,35.1 36.7,34.8 36.0,33.4 35.3,34.8 34.6,35.2 33.9,33.8 33.2,35.2 32.5,35.2 31.8,34.7 31.1,33.0 30.4,34.2 29.7,36.0 29.0,33.0 28.3,35.8 27.6,32.6 26.9,35.4 26.2,36.0 25.5,33.0 24.8,34.4 24.1,34.6 23.4,32.6 22.7,32.9 22.0,33.7 21.3,41.3 20.6,33.8 19.9,32.6 19.2,33.6 18.5,33.7 17.8,33.6 17.1,38.5 16.4,33.2 15.7,42.7 15.0,42.1 14.3,41.6 13.6,37.5 12.9,39.3 12.2,32.6 11.5,35.3" fill="#00c8e6" stroke="#00c8e6" stroke-width="0.3"/></svg>
<div class="yl" style="left:1314.5px;top:229.0px">35</div>
<div class="yl" style="left:1314.5px;top:269.0px">30</div>
<div class="yl" style="left:1314.5px;top:309.0px">25</div>
<div class="yl" style="left:1314.5px;top:349.0px">20</div>
<div class="yl" style="left:1314.5px;top:389.0px">15</div>
<div class="yl" style="left:1314.5px;top:429.0px">10</div>
<div class="yl" style="left:1314.5px;top:469.0px">5</div>
<div class="yl" style="left:1314.5px;top:509.0px">0</div>
<div class="xl" style="left:1379.5px;top:522.6px">02:00</div>
<div class="xl" style="left:1432.5px;top:522.6px">04:00</div>
<div class="xl" style="left:1484.5px;top:522.6px">06:00</div>
<div class="xl" style="left:1537.5px;top:522.6px">08:00</div>
<div class="bb" style="left:1260px;top:106px;width:20px;height:20px"><svg width="20" height="20"><use href="#trs"/></svg></div>
<div class="bb" style="left:1286px;top:108px;width:20px;height:20px"><svg width="20" height="20"><use href="#edt"/></svg></div>
<div class="bb" style="left:1636px;top:106px;width:20px;height:20px"><svg width="20" height="20"><use href="#trs"/></svg></div>
<div class="bb" style="left:1652px;top:324px;width:24px;height:24px"><svg width="24" height="24"><use href="#trl"/></svg></div>
<div class="a ttl" style="left:58px;top:674.6px;letter-spacing:0.25px">Machine mode</div>
<div class="a dt" style="left:58.5px;top:701.7px">2024/08/06</div>
<div class="dots" style="left:772.85px;top:682.2px"><i></i><i></i><i></i></div>
<svg class="a" style="left:0;top:0" width="830" height="1100"><path d="M434.88,732.22 A140,140 0 1 1 419.12,732.22 A5,5 0 0 1 424.40,737.21 L424.40,788.34 A5,5 0 0 1 419.85,793.32 A79,79 0 1 0 434.15,793.32 A5,5 0 0 1 429.60,788.34 L429.60,737.21 A5,5 0 0 1 434.88,732.22 Z" fill="#008000"/><path d="M427 1011.5V1027.2H442" fill="none" stroke="#0b7d0b" stroke-width="1.4"/><rect x="770" y="865" width="25" height="14" rx="3.5" fill="#008000"/></svg>
<div class="a" style="left:446px;top:1018.8px;font-size:13.3px;line-height:13.3px;color:#ebebeb;-webkit-text-stroke:0.2px #ebebeb">vVision Automatic</div>
<div class="a" style="left:560px;width:205.5px;text-align:right;top:864.2px;font-size:13.3px;line-height:13.3px;color:#e6e6e6;-webkit-text-stroke:0.2px #e6e6e6">vVision Automatic</div>
<div class="a ttl" style="left:880.5px;top:674.9px">Average Analysis time per inspection plan</div>
<div class="a dt" style="left:881px;top:701.7px">2024/08/06</div>
<div class="dots" style="left:1594.3px;top:682.2px"><i></i><i></i><i></i></div>
<svg class="a" style="left:900px;top:740px" width="720" height="330">
<line x1="20" y1="12.5" x2="700" y2="12.5" stroke="#3b3a3a" stroke-width="1"/>
<line x1="15" y1="12.5" x2="20" y2="12.5" stroke="#8f8f8f" stroke-width="1"/>
<line x1="20" y1="62.5" x2="700" y2="62.5" stroke="#3b3a3a" stroke-width="1"/>
<line x1="15" y1="62.5" x2="20" y2="62.5" stroke="#8f8f8f" stroke-width="1"/>
<line x1="20" y1="112.5" x2="700" y2="112.5" stroke="#3b3a3a" stroke-width="1"/>
<line x1="15" y1="112.5" x2="20" y2="112.5" stroke="#8f8f8f" stroke-width="1"/>
<line x1="20" y1="162.5" x2="700" y2="162.5" stroke="#3b3a3a" stroke-width="1"/>
<line x1="15" y1="162.5" x2="20" y2="162.5" stroke="#8f8f8f" stroke-width="1"/>
<line x1="20" y1="212.5" x2="700" y2="212.5" stroke="#3b3a3a" stroke-width="1"/>
<line x1="15" y1="212.5" x2="20" y2="212.5" stroke="#8f8f8f" stroke-width="1"/>
<line x1="20" y1="262.5" x2="700" y2="262.5" stroke="#3b3a3a" stroke-width="1"/>
<line x1="15" y1="262.5" x2="20" y2="262.5" stroke="#8f8f8f" stroke-width="1"/>
<line x1="15" y1="312.5" x2="20" y2="312.5" stroke="#8f8f8f" stroke-width="1"/>
<path d="M125 312V36a4 4 0 0 1 4-4h461a4 4 0 0 1 4 4v276z" fill="#02ddfe"/>
<line x1="19.5" y1="12" x2="19.5" y2="313" stroke="#9a9a9a" stroke-width="1"/>
<line x1="19" y1="312.5" x2="700" y2="312.5" stroke="#9a9a9a" stroke-width="1"/>
<line x1="20" y1="312" x2="20" y2="317.5" stroke="#9a9a9a" stroke-width="1"/>
<line x1="699.5" y1="312" x2="699.5" y2="317.5" stroke="#9a9a9a" stroke-width="1"/>
</svg>
<div class="yl" style="left:882px;top:744.8px">30</div>
<div class="yl" style="left:882px;top:794.8px">25</div>
<div class="yl" style="left:882px;top:844.8px">20</div>
<div class="yl" style="left:882px;top:894.8px">15</div>
<div class="yl" style="left:882px;top:944.8px">10</div>
<div class="yl" style="left:882px;top:994.8px">5</div>
<div class="yl" style="left:882px;top:1044.8px">0</div>
<div class="a" style="left:1160px;width:200px;text-align:center;top:1057.8px;font-size:12.5px;line-height:12.5px;color:#cfd1d5">Viscom_VT3</div>
<div class="bb" style="left:18px;top:644px;width:20px;height:20px"><svg width="20" height="20"><use href="#edt"/></svg></div>
<div class="bb" style="left:814px;top:642px;width:20px;height:20px"><svg width="20" height="20"><use href="#trs"/></svg></div>
<div class="bb" style="left:840px;top:644px;width:20px;height:20px"><svg width="20" height="20"><use href="#edt"/></svg></div>
<div class="bb" style="left:1636px;top:642px;width:20px;height:20px"><svg width="20" height="20"><use href="#trs"/></svg></div>
<div class="bb" style="left:1652px;top:860px;width:24px;height:24px"><svg width="24" height="24"><use href="#trl"/></svg></div>
</body></html>
